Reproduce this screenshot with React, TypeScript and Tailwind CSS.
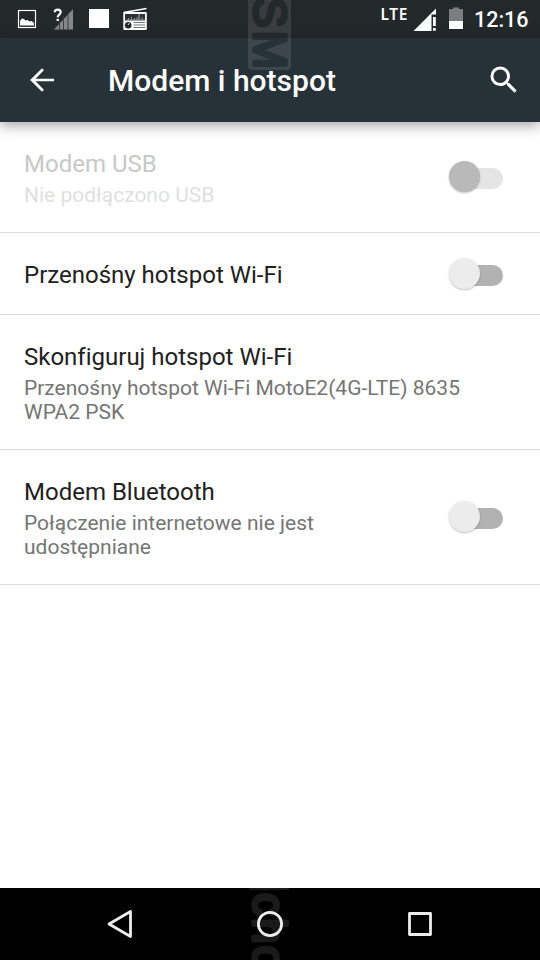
import type { ReactNode } from "react";
import { clsx } from "clsx";

interface Setting {
  title: string;
  summary?: string[];
  toggle?: boolean;
  disabled?: boolean;
  height: string;
}

const settings: Setting[] = [
  { title: "Modem USB", summary: ["Nie podłączono USB"], toggle: true, disabled: true, height: "h-[111px]" },
  { title: "Przenośny hotspot Wi-Fi", toggle: true, height: "h-[82px]" },
  {
    title: "Skonfiguruj hotspot Wi-Fi",
    summary: ["Przenośny hotspot Wi-Fi MotoE2(4G-LTE) 8635", "WPA2 PSK"],
    height: "h-[135px]",
  },
  {
    title: "Modem Bluetooth",
    summary: ["Połączenie internetowe nie jest", "udostępniane"],
    toggle: true,
    height: "h-[135px]",
  },
];

function StatusBar() {
  return (
    <div className="flex h-[38px] shrink-0 items-center bg-[#23282b] text-white">
      <svg className="h-[38px] w-[160px]" viewBox="0 0 160 38" fill="currentColor">
        <rect x="18.5" y="10.5" width="17" height="17" fill="none" stroke="#fff" strokeWidth="1.200" />
        <path d="M20 25.500v-4.500l2-2.500 2 .5 1.500 1.500 2-.5 2 1.500 2-.5 2.500 2v2.500z" />
        <path d="M73 9v20.500H54z" fill="#85888a" />
        <path d="M59.500 20v10M63.500 16v14M68 12v18" stroke="#3b4043" strokeWidth="1" />
        <path
          d="M54.700 12.300c0-3.700 6-3.700 6 0 0 2.300-3 2.500-3 5v3"
          fill="none"
          stroke="#23282b"
          strokeWidth="4.200"
        />
        <path d="M54.700 12.300c0-3.700 6-3.700 6 0 0 2.300-3 2.500-3 5" fill="none" stroke="#fff" strokeWidth="2.200" />
        <rect x="56.600" y="18.700" width="2.200" height="2.300" />
        <rect x="89" y="9" width="20" height="19" />
        <path d="M123.500 12.500L146.500 8.500" stroke="#fff" strokeWidth="1.300" />
        <rect x="123.300" y="12" width="23.500" height="18" rx="1" />
        <path d="M125 14h20v6.500h-20z" fill="#2b3033" />
        <path d="M126 20h19M128.500 18v2M131.500 17v3M134.500 18v2M137 17v3M142 17v3" stroke="#aaa" strokeWidth=".8" />
        <path d="M139 14v6" stroke="#888" strokeWidth="1.500" />
        <circle cx="128.200" cy="25.200" r="3.300" fill="#23282b" />
        <path d="M128 25l1.500-2" stroke="#ddd" strokeWidth="1" />
        <path d="M133.500 22.500h11.500M133.500 25h11.500M133.500 27.500h11.500" stroke="#777" strokeWidth="1" />
      </svg>
      <svg className="ml-auto h-[38px] w-[100px]" viewBox="370 0 100 38" fill="currentColor">
        <text x="380.500" y="20" fontSize="15.500" fontWeight="600" textLength="27" fontFamily="Noto Sans, sans-serif">
          LTE
        </text>
        <path d="M436 8.500v6h-4.500V31h-18z" />
        <path d="M433 17h2.800v9H433zM433 28h2.800v2.700H433z" />
        <path d="M453 9V7.500h6V9h4v12h-14V9z" fill="#7b7e80" />
        <path d="M449 21h14v8h-14z" />
      </svg>
      <time className="mt-[2px] w-[70px] whitespace-nowrap pl-[4px] font-medium text-[21.500px]">12:16</time>
    </div>
  );
}

function Header() {
  return (
    <header className="flex h-[84px] shrink-0 items-center bg-[#273238] text-white shadow-[0_4px_12px_rgba(0,0,0,0.34)]">
      <svg className="ml-[24px] size-[36px] shrink-0" viewBox="0 0 24 24" fill="currentColor">
        <path d="M20 11.100H7.700l5.550-5.600L12 4.200l-7.900 7.800 7.900 7.800 1.250-1.300-5.550-5.600H20z" />
      </svg>
      <h1 className="ml-[48px] mt-[2px] text-[30px] font-medium leading-none">Modem i hotspot</h1>
      <svg className="ml-auto mr-[18px] size-[36px] shrink-0" viewBox="0 0 24 24" fill="currentColor">
        <path d="M15.500 14h-.79l-.28-.27A6.471 6.471 0 0 0 16 9.500 6.500 6.500 0 1 0 9.500 16c1.610 0 3.090-.59 4.230-1.570l.27.28v.79l5 4.990L20.490 19l-4.990-5zm-6 0C7.010 14 5 11.990 5 9.500S7.010 5 9.500 5 14 7.010 14 9.500 11.990 14 9.500 14z" />
      </svg>
    </header>
  );
}

function Toggle({ disabled }: { disabled?: boolean }) {
  return (
    <span
      className={clsx(
        "relative mr-[37px] mt-[3px] h-[21px] w-[46px] shrink-0 rounded-full",
        disabled ? "bg-[#e5e5e5]" : "bg-[#b2b2b2]",
      )}
    >
      <span
        className={clsx(
          "absolute -left-[8px] -top-[7px] size-[31px] rounded-full shadow-[0_1px_2px_rgba(0,0,0,0.25)]",
          disabled ? "bg-[#b9b9b9]" : "bg-[#ececec]",
        )}
      />
    </span>
  );
}

function SettingRow({ title, summary, toggle, disabled, height }: Setting) {
  return (
    <li className={clsx("flex items-center border-b border-[#dcdcdc] pl-[24px]", height)}>
      <div className={clsx("flex-1 whitespace-nowrap", summary ? "mt-px" : "mt-[3px]")}>
        <div className={clsx("text-[24px] leading-[32px]", disabled ? "text-[#c8c8c8]" : "text-[#212121]")}>
          {title}
        </div>
        {summary && (
          <div
            className={clsx(
              "mt-[3px] text-[21px] leading-[24px]",
              disabled ? "text-[#dfdfdf]" : "text-[#757575]",
            )}
          >
            {summary.map((line) => (
              <div key={line}>{line}</div>
            ))}
          </div>
        )}
      </div>
      {toggle && <Toggle disabled={disabled} />}
    </li>
  );
}

function NavButton({ children }: { children: ReactNode }) {
  return (
    <button className="flex h-full w-[150px] items-center justify-center">
      <svg className="size-[30px]" viewBox="0 0 30 30" fill="none" stroke="#ececec" strokeWidth="2.800" strokeLinejoin="round">
        {children}
      </svg>
    </button>
  );
}

function NavBar() {
  return (
    <nav className="flex h-[72px] shrink-0 justify-center bg-black">
      <NavButton>
        <path d="M4 15L25.500 2.500v25z" />
      </NavButton>
      <NavButton>
        <circle cx="15" cy="15" r="11.600" />
      </NavButton>
      <NavButton>
        <rect x="4.500" y="4.500" width="21" height="21" />
      </NavButton>
    </nav>
  );
}

function Watermark() {
  return (
    <svg
      className="pointer-events-none absolute inset-0 h-full w-full"
      viewBox="0 0 540 960"
      fontFamily="Liberation Sans, sans-serif"
      fontSize="46"
      strokeWidth="3.500"
      strokeLinejoin="round"
    >
      <defs>
        {/* follows the status bar / header boundary along the rotated text */}
        <linearGradient id="bars" gradientUnits="userSpaceOnUse" x1="-35" y1="0" x2="-33" y2="0">
          <stop offset="0.5" stopColor="#23282b" />
          <stop offset="0.5" stopColor="#273238" />
        </linearGradient>
      </defs>
      <rect x="248" y="-60" width="43" height="130" rx="4" fill="#fff" fillOpacity="0.1" />
      <text
        transform="translate(253.500 72) rotate(90)"
        textAnchor="end"
        letterSpacing="3"
        fill="url(#bars)"
        stroke="url(#bars)"
      >
        SM
      </text>
      <g opacity="0.1" fill="#fff" stroke="#fff">
        <rect x="249" y="888" width="40" height="2" stroke="none" />
        <text transform="translate(252.500 893) rotate(90)" letterSpacing="2">
          cho
        </text>
      </g>
    </svg>
  );
}

export default function App() {
  return (
    <div className="relative flex h-[960px] w-[540px] flex-col overflow-hidden bg-white font-[Roboto,sans-serif] [font-variant-ligatures:none]">
      <StatusBar />
      <Header />
      <ul className="flex-1">
        {settings.map((item) => (
          <SettingRow key={item.title} {...item} />
        ))}
      </ul>
      <NavBar />
      <Watermark />
    </div>
  );
}
